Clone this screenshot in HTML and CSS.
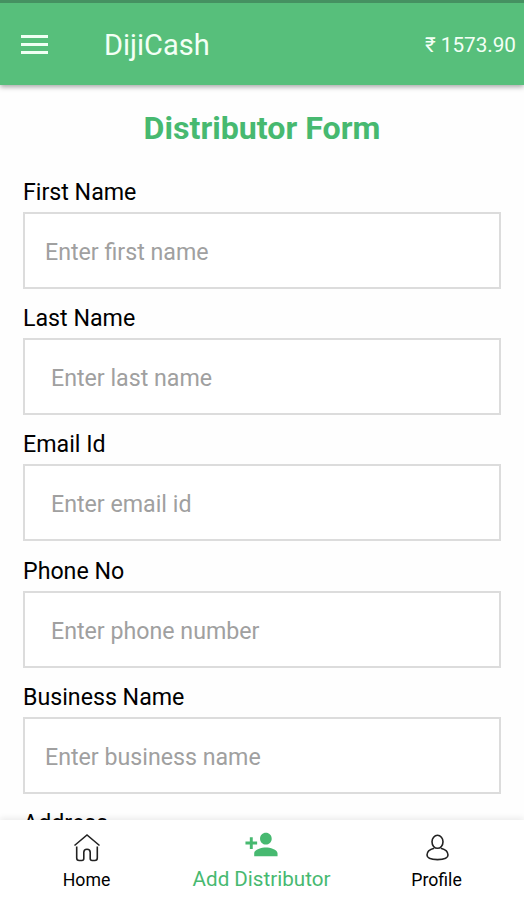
FILE: index.html
```html
<!DOCTYPE html>
<html lang="en">
<head>
    <meta charset="UTF-8">
    <meta name="viewport" content="width=device-width, initial-scale=1.0">
    <title>DijiCash</title>
    <link rel="stylesheet" href="styles.css">
</head>
<body>
    <header class="header">
        <button class="menu-button" aria-label="Menu">
            <span></span>
            <span></span>
            <span></span>
        </button>
        <h1>DijiCash</h1>
        <div class="balance">₹ 1573.90</div>
    </header>

    <main class="content">
        <h2>Distributor Form</h2>
        <form class="form">
            <div class="field">
                <label for="first-name">First Name</label>
                <input id="first-name" class="narrow" type="text" placeholder="Enter first name">
            </div>
            <div class="field">
                <label for="last-name">Last Name</label>
                <input id="last-name" type="text" placeholder="Enter last name">
            </div>
            <div class="field">
                <label for="email">Email Id</label>
                <input id="email" type="text" placeholder="Enter email id">
            </div>
            <div class="field">
                <label for="phone">Phone No</label>
                <input id="phone" type="text" placeholder="Enter phone number">
            </div>
            <div class="field">
                <label for="business-name">Business Name</label>
                <input id="business-name" class="narrow" type="text" placeholder="Enter business name">
            </div>
            <div class="field">
                <label for="address">Address</label>
                <input id="address" type="text" placeholder="Enter address">
            </div>
        </form>
    </main>

    <nav class="tab-bar">
        <a class="tab" href="#">
            <svg class="icon" width="28" height="30" viewBox="0 0 28 30">
                <path d="M1.500 12.500 14 2l12.500 10.500M3.700 13.500V25q0 2.500 2.500 2.500h2.600q2 0 2-2v-6.300q0-3 3.200-3t3.200 3v6.300q0 2 2 2h2.600q2.500 0 2.500-2.500V13.500"/>
            </svg>
            <span>Home</span>
        </a>
        <a class="tab active" href="#">
            <svg class="icon-add" width="35" height="35" viewBox="0 0 24 24">
                <path d="M15 12c2.210 0 4-1.790 4-4s-1.790-4-4-4-4 1.790-4 4 1.790 4 4 4zm-9-2V7H4v3H1v2h3v3h2v-3h3v-2H6zm9 4c-2.670 0-8 1.340-8 4v2h16v-2c0-2.660-5.330-4-8-4z"/>
            </svg>
            <span>Add Distributor</span>
        </a>
        <a class="tab" href="#">
            <svg class="icon" width="28" height="30" viewBox="0 0 28 30">
                <ellipse cx="14.500" cy="8.800" rx="5.500" ry="6.500"/>
                <path d="M11.200 15.200C7 16.200 4 18.300 4 22q0 4.600 10.500 4.600T25 22c0-3.700-3-5.800-7.200-6.800"/>
            </svg>
            <span>Profile</span>
        </a>
    </nav>
</body>
</html>
```
FILE: styles.css
```css
* {
    margin: 0;
    padding: 0;
    box-sizing: border-box;
}

body {
    font-family: Roboto, 'Noto Sans', sans-serif;
    background-color: #fefefe;
    color: #000000;
    height: 100vh;
    display: flex;
    flex-direction: column;
    overflow: hidden;
}

.header {
    flex: none;
    height: 85px;
    display: flex;
    align-items: center;
    padding: 0 8px 0 21px;
    background-color: #57bf7b;
    border-top: 3px solid #459161;
    box-shadow: 0 2px 5px rgba(0, 0, 0, 0.35);
    color: #f3fff5;
    z-index: 1;
}

.menu-button {
    width: 27px;
    display: flex;
    flex-direction: column;
    gap: 5px;
    border: none;
    background: none;
}

.menu-button span {
    height: 3px;
    background-color: #f0fff3;
}

.header h1 {
    flex: 1;
    margin-left: 56px;
    padding-top: 2px;
    font-size: 29px;
    font-weight: 400;
}

.balance {
    padding-top: 2px;
    font-size: 20.7px;
}

.content {
    flex: 1;
    min-height: 0;
    overflow: hidden;
    padding: 24px 23px 0;
}

.content h2 {
    color: #47b970;
    font-size: 32.2px;
    line-height: 38px;
    font-weight: 700;
    text-align: center;
    margin-bottom: 30px;
}

.field {
    height: 126.2px;
}

.field label {
    display: block;
    height: 35px;
    padding-top: 1px;
    font-size: 23.2px;
    line-height: 29px;
}

.field input {
    display: block;
    width: 478px;
    height: 77px;
    padding: 3px 26px 0;
    border: 2px solid #dcdcdc;
    background-color: #ffffff;
    font-family: inherit;
    font-size: 23.2px;
}

.field input.narrow {
    padding-left: 20px;
}

.field input::placeholder {
    color: #a0a0a0;
}

.tab-bar {
    flex: none;
    height: 80px;
    padding-right: 1px;
    display: grid;
    grid-template-columns: 173px 1fr 173px;
    background-color: #ffffff;
    box-shadow: 0 -2px 6px rgba(0, 0, 0, 0.08);
    z-index: 1;
}

.tab {
    display: flex;
    flex-direction: column;
    align-items: center;
    justify-content: flex-end;
    padding-bottom: 10px;
    color: #000000;
    font-size: 17.700px;
    line-height: 20px;
    text-decoration: none;
}

.tab.active {
    padding-bottom: 11px;
    color: #47b970;
    font-size: 20.6px;
}

.icon {
    fill: none;
    stroke: #222222;
    stroke-width: 1.6;
    margin-bottom: 7px;
}

.icon-add {
    fill: #47b970;
    margin-bottom: 7px;
}
```
